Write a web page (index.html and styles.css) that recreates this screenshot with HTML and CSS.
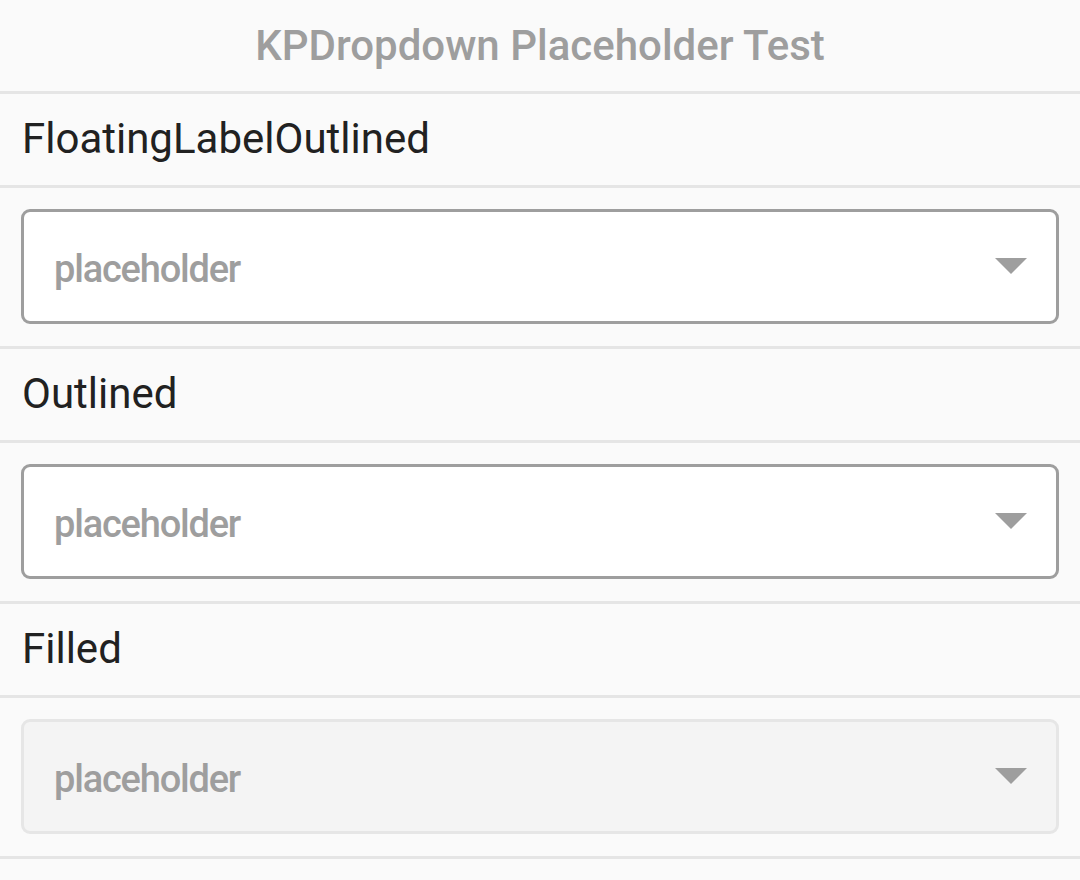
FILE: index.html
```html
<!DOCTYPE html>
<html>
<head>
<meta charset="utf-8">
<link rel="stylesheet" href="styles.css">
</head>
<body>
<div class="page">
  <header class="header">KPDropdown Placeholder Test</header>
  <div class="label-row">FloatingLabelOutlined</div>
  <div class="field-row">
    <div class="dropdown outlined">
      <span class="placeholder">placeholder</span>
      <svg class="arrow" width="32" height="16" viewBox="0 0 32 16"><polygon points="0,0 32,0 16,16" fill="#9e9e9e"/></svg>
    </div>
  </div>
  <div class="label-row">Outlined</div>
  <div class="field-row">
    <div class="dropdown outlined">
      <span class="placeholder">placeholder</span>
      <svg class="arrow" width="32" height="16" viewBox="0 0 32 16"><polygon points="0,0 32,0 16,16" fill="#9e9e9e"/></svg>
    </div>
  </div>
  <div class="label-row">Filled</div>
  <div class="field-row">
    <div class="dropdown filled">
      <span class="placeholder">placeholder</span>
      <svg class="arrow" width="32" height="16" viewBox="0 0 32 16"><polygon points="0,0 32,0 16,16" fill="#9e9e9e"/></svg>
    </div>
  </div>
</div>
</body>
</html>
```
FILE: styles.css
```css
* { box-sizing: border-box; }
html, body { margin: 0; padding: 0; }
body {
  background: #fafafa;
  font-family: Roboto, "Liberation Sans", sans-serif;
  width: 1080px;
  height: 880px;
  overflow: hidden;
}
.page { display: flex; flex-direction: column; }
.header {
  height: 94px;
  border-bottom: 3px solid #e5e5e5;
  display: flex;
  align-items: center;
  justify-content: center;
  color: #9e9e9e;
  font-weight: 500;
  font-size: 42px;
  padding-bottom: 1px;
}
.label-row {
  height: 94px;
  border-bottom: 3px solid #e5e5e5;
  display: flex;
  align-items: center;
  padding-left: 22px;
  color: #212121;
  font-size: 42px;
  padding-bottom: 2px;
}
.field-row {
  height: 161px;
  border-bottom: 3px solid #e5e5e5;
  padding: 21px 21px 22px 21px;
}
.dropdown {
  height: 115px;
  border-radius: 9px;
  display: flex;
  align-items: center;
  justify-content: space-between;
  padding: 0 29px 0 30px;
}
.outlined { background: #ffffff; border: 3px solid #9e9e9e; }
.filled { background: #f4f4f4; border: 3px solid #e6e6e6; }
.placeholder {
  color: #9e9e9e;
  font-weight: 500;
  font-size: 38px;
  letter-spacing: -1.2px;
  margin-top: 4px;
}
.arrow { display: block; margin-top: -1px; }
```
